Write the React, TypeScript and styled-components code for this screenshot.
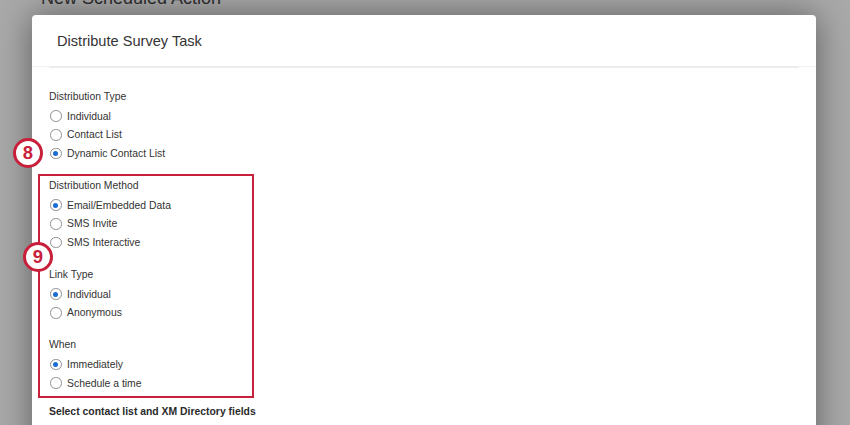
import React from "react";
import styled, { createGlobalStyle } from "styled-components";

const GlobalStyle = createGlobalStyle`
    html, body {
        margin: 0;
        padding: 0;
        background: #a9a9a9;
        overflow: hidden;
    }
    body {
        font-family: "Liberation Sans", Arial, sans-serif;
        color: #333333;
    }
`

const Page = styled.div`
    display: flex;
    flex-direction: column;
    height: 425px;
`

const PageTitle = styled.h1`
    margin: -11px 0 0 41px;
    font-size: 18px;
    line-height: 18px;
    font-weight: 400;
    color: #2e2e2e;
`

const Modal = styled.div`
    margin: 8px 0 0 32px;
    width: 784px;
    min-height: 520px;
    background: #ffffff;
    border-radius: 4px;
    box-shadow: 0 0 34px rgba(0, 0, 0, 0.45);
`

const ModalHeader = styled.div`
    display: flex;
    align-items: center;
    height: 51px;
    padding-left: 25px;
    font-size: 14.6px;
    color: #333333;
    border-bottom: 1px solid #f2f2f2;
`

const Divider = styled.div`
    height: 2px;
    margin: -1px 17px 0;
    background: #ececec;
`

const ModalBody = styled.div`
    display: flex;
    flex-direction: column;
    padding: 20px 17px 0;
`

const Group = styled.div`
    display: flex;
    flex-direction: column;
`

const Label = styled.div<{ $bold?: boolean }>`
    height: 18.75px;
    line-height: 18.75px;
    font-size: 10.4px;
    font-weight: ${props => props.$bold ? 700 : 400};
    color: ${props => props.$bold ? '#2b2b2b' : '#333333'};
    white-space: nowrap;
`

const Row = styled.label`
    position: relative;
    display: flex;
    align-items: center;
    height: 18.75px;
    font-size: 10.4px;
    color: #333333;
    white-space: nowrap;
`

const Radio = styled.span<{ $checked?: boolean }>`
    display: flex;
    align-items: center;
    justify-content: center;
    box-sizing: border-box;
    width: 11.5px;
    height: 11.5px;
    margin: 0 5.5px 0 1px;
    border: 1px solid #8f8f8f;
    border-radius: 50%;
    background: #ffffff;
    &::after {
        content: "";
        display: ${props => props.$checked ? 'block' : 'none'};
        width: 5px;
        height: 5px;
        border-radius: 50%;
        background: #1a6dd4;
    }
`

const Highlight = styled.div`
    position: relative;
    display: flex;
    flex-direction: column;
    gap: 14px;
    width: 216px;
    box-sizing: border-box;
    margin: 11px 0 0 -11px;
    padding: 1px 0 3px 9px;
    border: 2px solid #c8203a;
`

const Badge = styled.div<{ $left: number; $top: number }>`
    position: absolute;
    left: ${props => props.$left}px;
    top: ${props => props.$top}px;
    display: flex;
    align-items: center;
    justify-content: center;
    box-sizing: border-box;
    width: 30px;
    height: 30px;
    border: 3px solid #c8203a;
    border-radius: 50%;
    background: #ffffff;
    color: #c8203a;
    font-size: 18.5px;
    font-weight: 700;
`

const SectionTitle = styled(Label)`
    margin-top: 5.5px;
`

interface Option {
    text: string;
    checked?: boolean;
}

const RadioGroup = ({ title, options }: { title: string; options: Option[] }) => (
    <Group>
        <Label>{title}</Label>
        {options.map(o => (
            <Row key={o.text}>
                <Radio $checked={o.checked} />
                {o.text}
            </Row>
        ))}
    </Group>
)

export default function App() {
    return (
        <Page>
            <GlobalStyle />
            <PageTitle>New Scheduled Action</PageTitle>
            <Modal>
                <ModalHeader>Distribute Survey Task</ModalHeader>
                <Divider />
                <ModalBody>
                    <Group>
                        <Label>Distribution Type</Label>
                        <Row>
                            <Radio />
                            Individual
                        </Row>
                        <Row>
                            <Radio />
                            Contact List
                        </Row>
                        <Row>
                            <Radio $checked />
                            Dynamic Contact List
                            <Badge $left={-36} $top={-6}>8</Badge>
                        </Row>
                    </Group>
                    <Highlight>
                        <Badge $left={-17} $top={66}>9</Badge>
                        <RadioGroup
                            title="Distribution Method"
                            options={[
                                { text: "Email/Embedded Data", checked: true },
                                { text: "SMS Invite" },
                                { text: "SMS Interactive" },
                            ]}
                        />
                        <RadioGroup
                            title="Link Type"
                            options={[
                                { text: "Individual", checked: true },
                                { text: "Anonymous" },
                            ]}
                        />
                        <RadioGroup
                            title="When"
                            options={[
                                { text: "Immediately", checked: true },
                                { text: "Schedule a time" },
                            ]}
                        />
                    </Highlight>
                    <SectionTitle $bold>Select contact list and XM Directory fields</SectionTitle>
                </ModalBody>
            </Modal>
        </Page>
    );
}
